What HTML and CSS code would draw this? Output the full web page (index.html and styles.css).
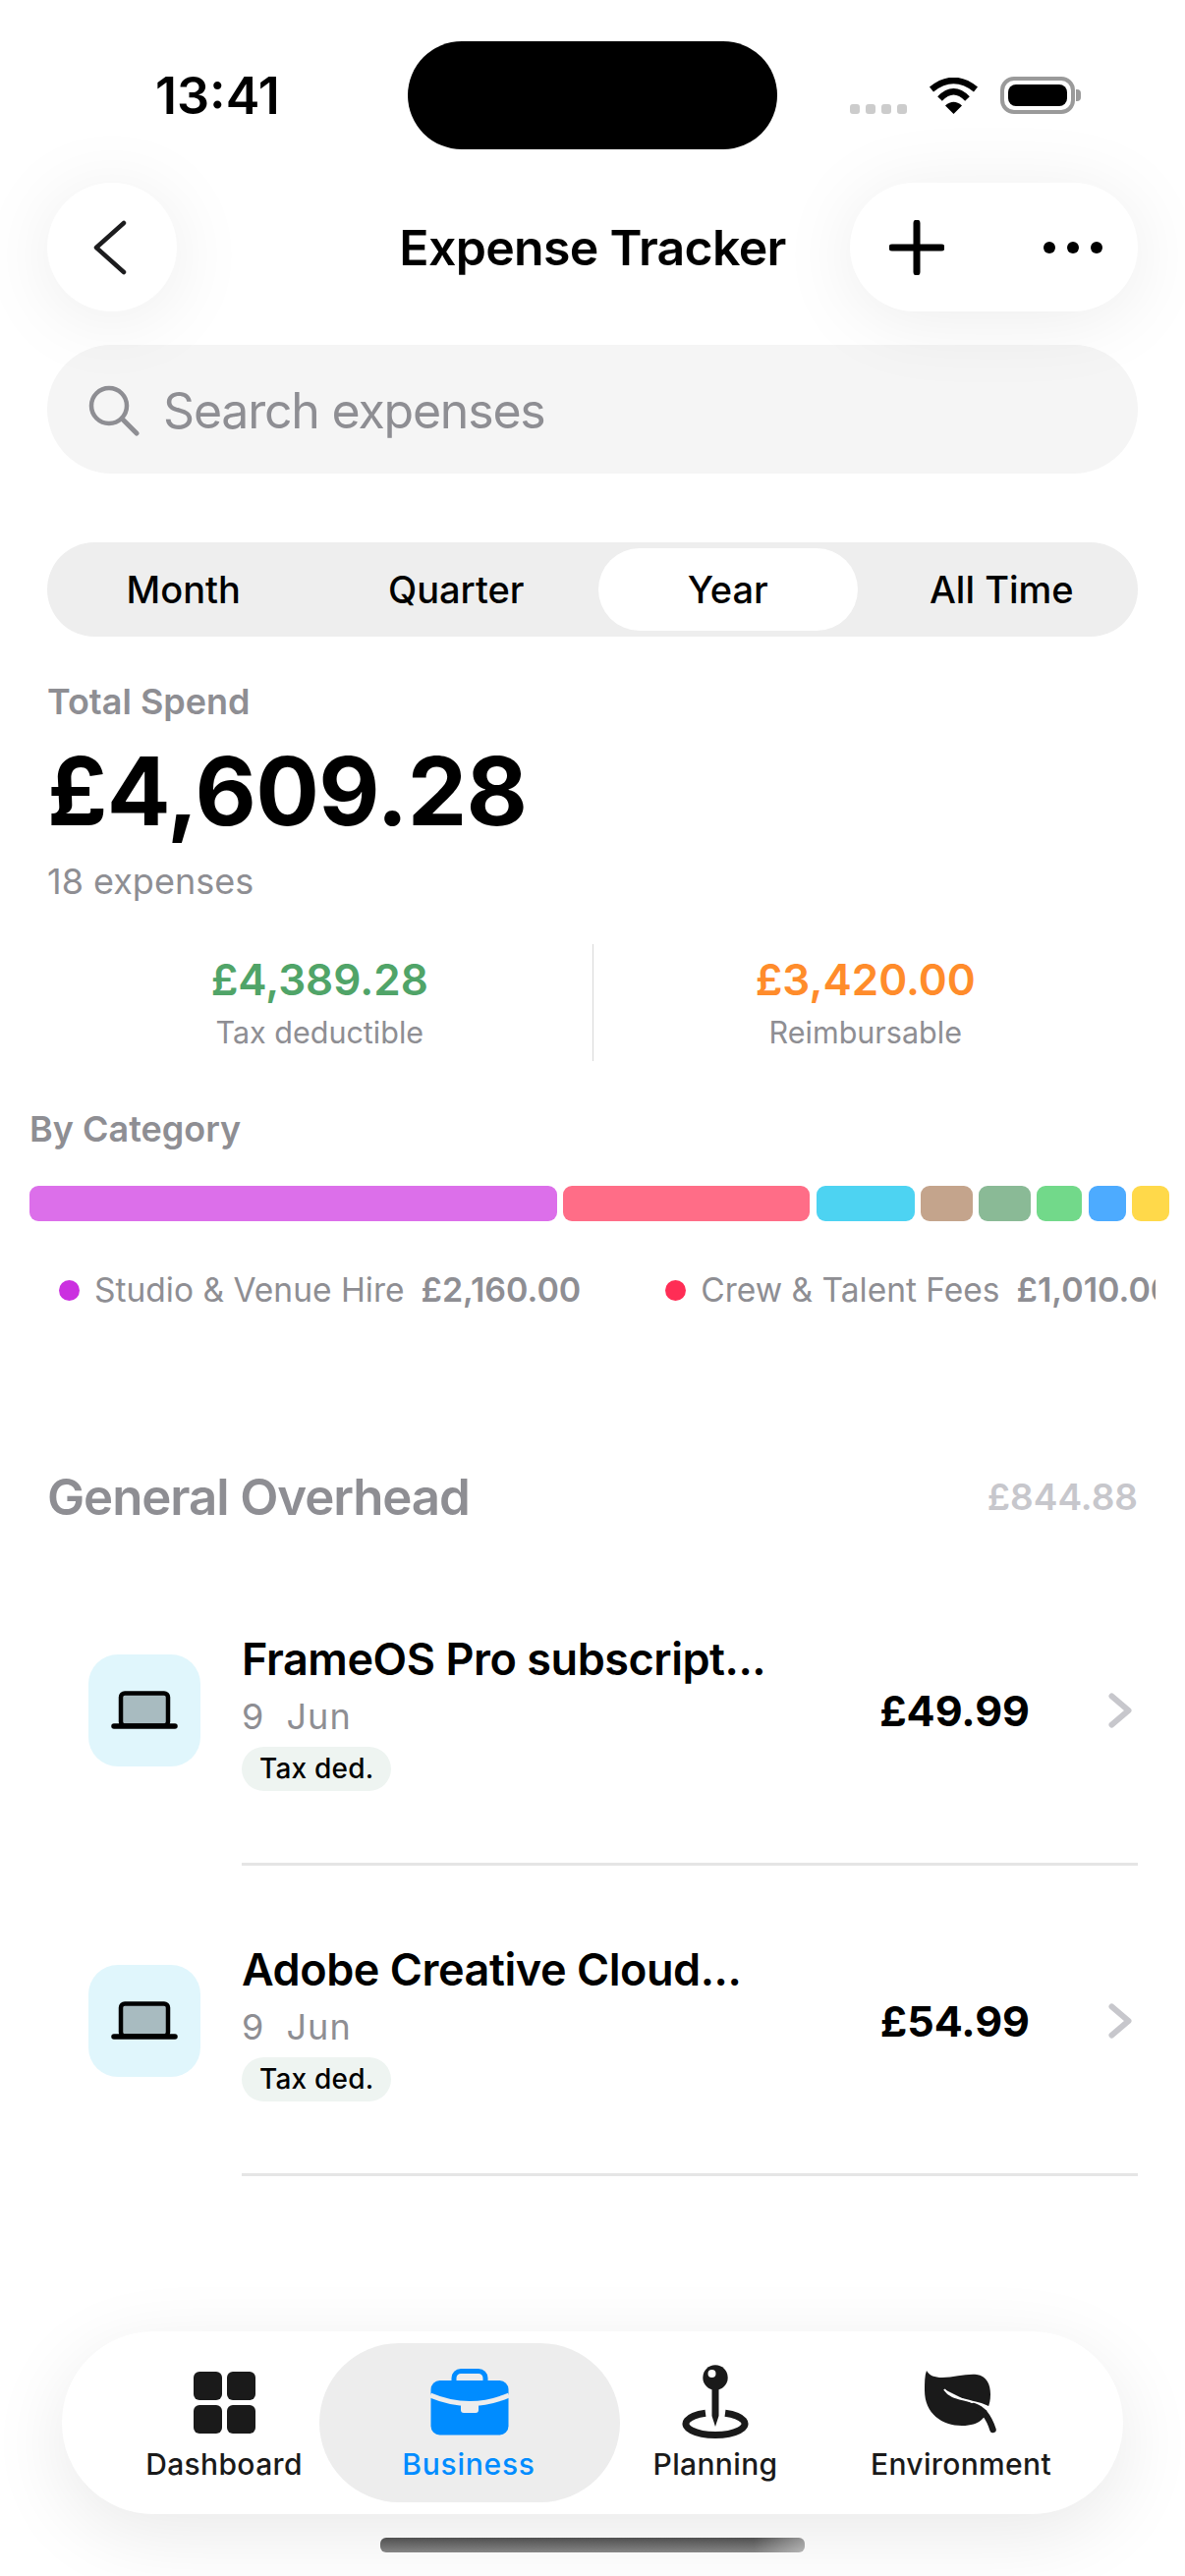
FILE: index.html
```html
<!DOCTYPE html>
<html lang="en">
<head>
  <meta charset="UTF-8" />
  <meta name="viewport" content="width=device-width, initial-scale=1.0" />
  <title>Expense Tracker</title>
  <link rel="stylesheet" href="styles.css">
</head>
<body>
  <div class="screen">
    <div class="status-bar">
      <div class="status-left">13:41</div>
      <div class="island"></div>
      <div class="status-right">
        <div class="signal"><span></span><span></span><span></span><span></span></div>
        <svg class="wifi" width="51" height="37" viewBox="0 0 51 37">
          <path d="M3 12 Q25.5 -6 48 12" fill="none" stroke="#000" stroke-width="6.5"/>
          <path d="M11.5 21.5 Q25.5 7 39.5 21.5" fill="none" stroke="#000" stroke-width="6.5"/>
          <path d="M25.5 37 L17 28.5 Q25.5 21 34 28.5 Z" fill="#000"/>
        </svg>
        <div class="battery"><div class="battery-fill"></div></div>
      </div>
    </div>

    <div class="nav">
      <div class="nav-left">
        <button class="nav-btn back-btn">
          <svg width="36" height="56" viewBox="0 0 36 56">
            <path d="M33 3 L5 28 L33 53" fill="none" stroke="#1c1c1e" stroke-width="4.5" stroke-linecap="round" stroke-linejoin="round"/>
          </svg>
        </button>
      </div>
      <div class="nav-title">Expense Tracker</div>
      <div class="nav-right">
        <div class="nav-pill">
          <svg width="56" height="56" viewBox="0 0 56 56">
            <path d="M28 3 V53 M3 28 H53" fill="none" stroke="#000" stroke-width="7" stroke-linecap="round"/>
          </svg>
          <svg width="62" height="14" viewBox="0 0 62 14">
            <circle cx="7" cy="7" r="6"/><circle cx="31" cy="7" r="6"/><circle cx="55" cy="7" r="6"/>
          </svg>
        </div>
      </div>
    </div>

    <div class="search">
      <svg width="52" height="52" viewBox="0 0 52 52">
        <circle cx="21" cy="21" r="18" fill="none" stroke="#8e8e93" stroke-width="4.5"/>
        <path d="M34 34 L49 49" fill="none" stroke="#8e8e93" stroke-width="5" stroke-linecap="round"/>
      </svg>
      <span>Search expenses</span>
    </div>

    <div class="segments">
      <div class="segment">Month</div>
      <div class="segment">Quarter</div>
      <div class="segment active">Year</div>
      <div class="segment">All Time</div>
    </div>

    <div class="summary">
      <div class="summary-label">Total Spend</div>
      <div class="summary-total">£4,609.28</div>
      <div class="summary-count">18 expenses</div>
    </div>

    <div class="stats">
      <div class="stat">
        <div class="stat-value green">£4,389.28</div>
        <div class="stat-label">Tax deductible</div>
      </div>
      <div class="stat">
        <div class="stat-value orange">£3,420.00</div>
        <div class="stat-label">Reimbursable</div>
      </div>
    </div>

    <div class="category-title">By Category</div>
    <div class="category-bar">
      <div class="bar-part" style="width: 537px; background: #dc6fea"></div>
      <div class="bar-part" style="width: 251px; background: #ff6d87"></div>
      <div class="bar-part" style="width: 100px; background: #4dd3f2"></div>
      <div class="bar-part" style="width: 53px; background: #c4a48c"></div>
      <div class="bar-part" style="width: 53px; background: #8aba96"></div>
      <div class="bar-part" style="width: 46px; background: #72d98a"></div>
      <div class="bar-part" style="width: 38px; background: #4dabff"></div>
      <div class="bar-part" style="width: 38px; background: #ffd94a"></div>
    </div>
    <div class="legend">
      <div class="legend-item">
        <span class="legend-dot" style="background: #cb30e0"></span>
        <span class="legend-name">Studio &amp; Venue Hire</span>
        <span class="legend-amount">£2,160.00</span>
      </div>
      <div class="legend-item">
        <span class="legend-dot" style="background: #ff2d55"></span>
        <span class="legend-name">Crew &amp; Talent Fees</span>
        <span class="legend-amount">£1,010.00</span>
      </div>
    </div>

    <div class="section-head">
      <div class="section-name">General Overhead</div>
      <div class="section-amount">£844.88</div>
    </div>

    <div class="list">
      <div class="row">
        <div class="row-icon">
          <svg width="70" height="40" viewBox="0 0 70 40">
            <rect x="11" y="2.5" width="48" height="33" rx="4" fill="#a8bbc0" stroke="#000" stroke-width="4.5"/>
            <path d="M4 36 H66" fill="none" stroke="#000" stroke-width="5.5" stroke-linecap="round"/>
          </svg>
        </div>
        <div class="row-body">
          <div class="row-text">
            <div class="row-title">FrameOS Pro subscript...</div>
            <div class="row-date">9  Jun</div>
            <div class="row-tag">Tax ded.</div>
          </div>
          <div class="row-amount">£49.99</div>
          <svg class="row-chevron" width="24" height="36" viewBox="0 0 24 36">
            <path d="M3.5 3.5 L20.5 18 L3.5 32.5" fill="none" stroke="#c7c7cc" stroke-width="6" stroke-linecap="round" stroke-linejoin="round"/>
          </svg>
        </div>
      </div>
      <div class="row">
        <div class="row-icon">
          <svg width="70" height="40" viewBox="0 0 70 40">
            <rect x="11" y="2.5" width="48" height="33" rx="4" fill="#a8bbc0" stroke="#000" stroke-width="4.5"/>
            <path d="M4 36 H66" fill="none" stroke="#000" stroke-width="5.5" stroke-linecap="round"/>
          </svg>
        </div>
        <div class="row-body">
          <div class="row-text">
            <div class="row-title">Adobe Creative Cloud...</div>
            <div class="row-date">9  Jun</div>
            <div class="row-tag">Tax ded.</div>
          </div>
          <div class="row-amount">£54.99</div>
          <svg class="row-chevron" width="24" height="36" viewBox="0 0 24 36">
            <path d="M3.5 3.5 L20.5 18 L3.5 32.5" fill="none" stroke="#c7c7cc" stroke-width="6" stroke-linecap="round" stroke-linejoin="round"/>
          </svg>
        </div>
      </div>
    </div>

    <div class="tabbar">
      <div class="tab">
        <div class="tab-icon">
          <svg width="63" height="63" viewBox="0 0 63 63" fill="#1a1a1a">
            <rect x="0" y="0" width="29" height="29" rx="6"/>
            <rect x="34" y="0" width="29" height="29" rx="6"/>
            <rect x="0" y="34" width="29" height="29" rx="6"/>
            <rect x="34" y="34" width="29" height="29" rx="6"/>
          </svg>
        </div>
        <div class="tab-label">Dashboard</div>
      </div>
      <div class="tab active">
        <div class="tab-icon">
          <svg width="80" height="68" viewBox="0 0 80 68">
            <rect x="24" y="2.5" width="32" height="18" rx="7" fill="none" stroke="#008cff" stroke-width="5"/>
            <rect x="0.5" y="12" width="79" height="55.5" rx="9" fill="#008cff"/>
            <path d="M0 27 Q40 44 80 27" fill="none" stroke="#ededed" stroke-width="5"/>
            <rect x="31" y="35" width="18" height="10" rx="3" fill="#ededed"/>
          </svg>
        </div>
        <div class="tab-label">Business</div>
      </div>
      <div class="tab">
        <div class="tab-icon">
          <svg width="68" height="76" viewBox="0 0 68 76">
            <path d="M24 49.2 A30 11.5 0 1 0 44 49.2" fill="none" stroke="#1a1a1a" stroke-width="7" stroke-linecap="butt"/>
            <path d="M30.5 20 V52 L34 63 L37.5 52 V20 Z" fill="#1a1a1a"/>
            <circle cx="34" cy="13" r="12.7" fill="#1a1a1a"/>
            <circle cx="30.5" cy="9" r="4" fill="#fff"/>
          </svg>
        </div>
        <div class="tab-label">Planning</div>
      </div>
      <div class="tab">
        <div class="tab-icon">
          <svg width="74" height="64" viewBox="0 0 74 64">
            <path d="M2 0 C5 5 10 7 18 7 C30 7 42 3 53 4 C63 5 67 14 67 24 C67 30 66 34 64 39 C62 47 57 56 38 56 C18 56 0 44 0 20 C0 12 0 5 2 0 Z" fill="#1a1a1a"/>
            <path d="M20 19 C26 28 36 28 46 31 C55 33.5 62 34 70 40 L66 42" fill="#fff" stroke="#fff" stroke-width="2"/>
            <path d="M50 36 C60 39 66 49 69.5 60" fill="none" stroke="#1a1a1a" stroke-width="6.5" stroke-linecap="round"/>
          </svg>
        </div>
        <div class="tab-label">Environment</div>
      </div>
    </div>
    <div class="home-indicator"></div>
  </div>
</body>
</html>
```

FILE: styles.css
```css
* { box-sizing: border-box; }
body {
  margin: 0;
  background: #fff;
  font-family: Inter, "Liberation Sans", sans-serif;
  color: #000;
}
.screen {
  position: relative;
  width: 1206px;
  height: 2622px;
  overflow: hidden;
  background: #fff;
}

/* status bar */
.status-bar { display: flex; padding-top: 42px; height: 152px; }
.status-left {
  width: 415px;
  height: 110px;
  line-height: 112px;
  padding-left: 158px;
  font-size: 52px;
  font-weight: 600;
}
.island { width: 376px; height: 110px; background: #000; border-radius: 55px; }
.status-right { display: flex; align-items: center; height: 110px; padding-left: 74px; }
.signal { display: flex; gap: 6px; margin-top: 28px; margin-right: 22px; }
.signal span { width: 10px; height: 10px; border-radius: 3px; background: #ccc; }
.wifi { margin-right: 22px; }
.battery {
  position: relative;
  width: 76px;
  height: 38px;
  border: 4px solid #9a9a9a;
  border-radius: 14px;
  padding: 4px;
}
.battery::after {
  content: "";
  position: absolute;
  right: -10px;
  top: 9px;
  width: 5px;
  height: 12px;
  background: #9a9a9a;
  border-radius: 0 4px 4px 0;
}
.battery-fill { height: 100%; background: #000; border-radius: 8px; }

/* nav */
.nav {
  position: relative;
  z-index: 1;
  display: grid;
  grid-template-columns: 1fr auto 1fr;
  align-items: center;
  margin-top: 34px;
  padding: 0 48px;
  height: 131px;
}
.nav-btn {
  display: flex;
  align-items: center;
  justify-content: center;
  width: 132px;
  height: 131px;
  padding: 0 6px 0 0;
  border: none;
  border-radius: 66px;
  background: #fff;
  box-shadow: 0 8px 80px rgba(0,0,0,0.08);
}
.nav-title { font-size: 50px; font-weight: 600; letter-spacing: -0.7px; }
.nav-right { display: flex; justify-content: flex-end; }
.nav-pill {
  display: flex;
  align-items: center;
  gap: 100px;
  width: 293px;
  height: 131px;
  padding-left: 40px;
  border-radius: 66px;
  background: #fff;
  box-shadow: 0 8px 80px rgba(0,0,0,0.08);
}

/* search */
.search {
  display: flex;
  align-items: center;
  gap: 24px;
  margin: 34px 48px 0;
  height: 131px;
  padding: 2px 0 0 42px;
  border-radius: 66px;
  background: #f5f5f5;
  font-size: 50px;
  letter-spacing: -1.2px;
  color: #8e8e93;
}

/* segmented control */
.segments {
  display: grid;
  grid-template-columns: repeat(4, 1fr);
  margin: 70px 48px 0;
  height: 96px;
  border-radius: 48px;
  background: #eeeeee;
}
.segment {
  margin: 6px;
  border-radius: 42px;
  font-size: 38px;
  font-weight: 500;
  line-height: 84px;
  text-align: center;
}
.segment.active { background: #fff; margin-right: 8px; }

/* totals */
.summary { padding: 0 48px; }
.summary-label {
  margin-top: 42px;
  font-size: 36px;
  font-weight: 600;
  line-height: 48px;
  color: #8e8e93;
}
.summary-total {
  margin-top: 12px;
  font-size: 96px;
  font-weight: 700;
  line-height: 110px;
  letter-spacing: -0.6px;
}
.summary-count {
  margin-top: 13px;
  font-size: 36px;
  line-height: 48px;
  color: #8e8e93;
}
.stats { display: flex; margin: 40px 48px 0; height: 119px; }
.stat { flex: 1; padding-top: 9px; text-align: center; }
.stat + .stat { border-left: 1px solid #d8d8d8; }
.stat-value { font-size: 44px; font-weight: 600; line-height: 54px; }
.stat-value.green { color: #50a468; }
.stat-value.orange { color: #ff8c2b; }
.stat-label { margin-top: 7px; font-size: 30.5px; line-height: 40px; color: #8e8e93; }

/* categories */
.category-title {
  margin: 45px 0 0 30px;
  font-size: 36px;
  font-weight: 600;
  line-height: 48px;
  color: #8e8e93;
}
.category-bar { display: flex; gap: 6.3px; margin: 34px 0 0 30px; height: 36px; }
.bar-part { height: 36px; border-radius: 9px; }
.legend { display: flex; gap: 86px; margin: 46px 0 0 60px; width: 1116px; overflow: hidden; }
.legend-item { display: flex; align-items: center; flex-shrink: 0; line-height: 48px; font-size: 33.5px; color: #8e8e93; }
.legend-dot { width: 21px; height: 21px; border-radius: 50%; margin-right: 15px; }
.legend-amount { margin-left: 17px; font-size: 34px; font-weight: 600; }

/* section */
.section-head {
  display: flex;
  justify-content: space-between;
  align-items: center;
  margin: 154px 48px 0;
  height: 64px;
}
.section-name { font-size: 51px; font-weight: 600; letter-spacing: -1.1px; color: #8e8e93; }
.section-amount { font-size: 37px; font-weight: 600; color: #c7c7cc; }

/* list */
.list { margin-top: 28px; padding: 0 48px 0 90px; }
.row { display: flex; align-items: center; height: 316px; }
.row-icon {
  display: flex;
  align-items: center;
  justify-content: center;
  flex-shrink: 0;
  width: 114px;
  height: 114px;
  margin-right: 42px;
  border-radius: 30px;
  background: #e0f6fc;
}
.row-body {
  display: flex;
  align-items: center;
  flex: 1;
  height: 316px;
  padding-top: 3px;
  border-bottom: 3px solid #e5e5e5;
}
.row-text { flex: 1; padding-top: 3px; }
.row-title { font-size: 45px; font-weight: 600; line-height: 54px; letter-spacing: -0.45px; }
.row-date { margin-top: 9px; font-size: 36px; line-height: 44px; color: #8e8e93; white-space: pre; letter-spacing: 1px; }
.row-tag {
  display: inline-block;
  margin-top: 9px;
  padding: 0 18px;
  height: 45px;
  border-radius: 23px;
  background: #eef4f1;
  font-size: 28px;
  font-weight: 500;
  line-height: 45px;
  letter-spacing: 0.2px;
}
.row-amount { font-size: 43px; font-weight: 700; }
.row-chevron { margin: 0 6px 0 80px; }

/* tab bar */
.tabbar {
  position: absolute;
  left: 63px;
  top: 2373px;
  display: grid;
  grid-template-columns: repeat(4, 250px);
  width: 1080px;
  height: 186px;
  padding: 34px 40px 0;
  border-radius: 93px;
  background: #fff;
  box-shadow: 0 20px 80px rgba(0,0,0,0.09);
}
.tab { position: relative; text-align: center; color: #1a1a1a; }
.tab.active { color: #008cff; }
.tab.active::before {
  content: "";
  position: absolute;
  left: -28px;
  right: -28px;
  top: -22px;
  height: 162px;
  border-radius: 81px;
  background: #ededed;
}
.tab-icon {
  position: relative;
  display: flex;
  align-items: center;
  justify-content: center;
  height: 76px;
}
.tab-label { position: relative; margin-top: 7px; font-size: 30px; font-weight: 500; line-height: 36px; letter-spacing: 0.35px; }
.tab.active .tab-label { margin-right: 2px; letter-spacing: 0.75px; }
.home-indicator {
  position: absolute;
  left: 387px;
  top: 2583px;
  width: 432px;
  height: 15px;
  border-radius: 6px;
  background: linear-gradient(90deg, rgba(255,255,255,0) 88%, rgba(255,255,255,0.4) 100%), linear-gradient(180deg, #505050, #858585);
}
```
